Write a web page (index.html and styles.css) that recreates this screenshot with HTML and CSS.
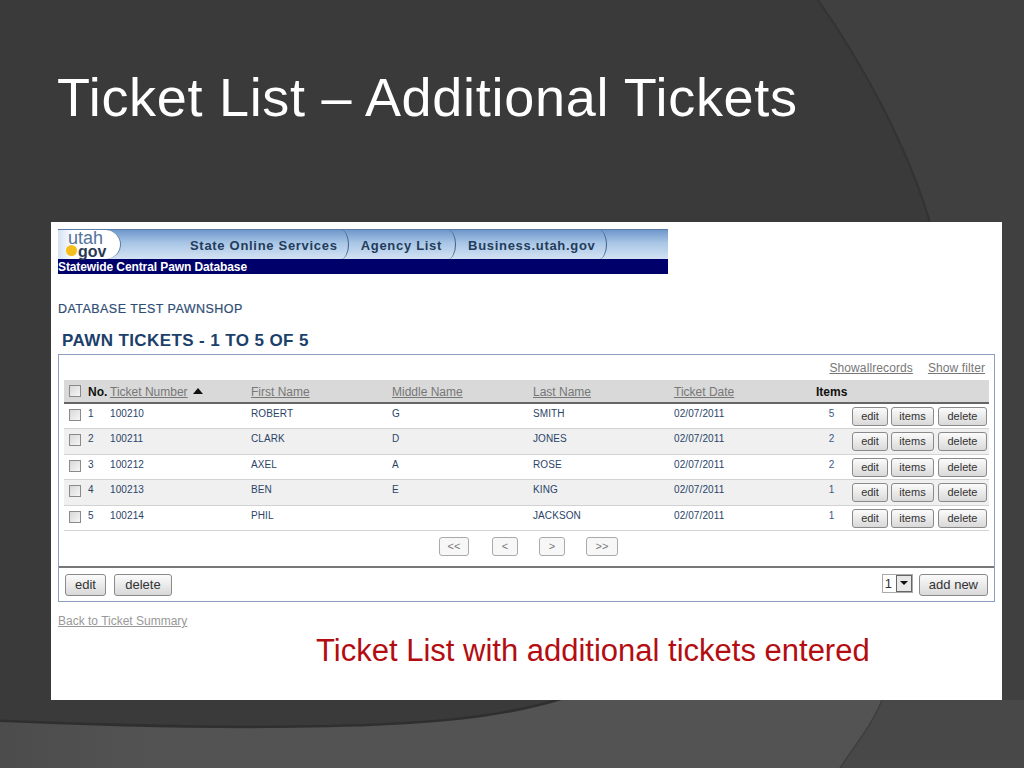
FILE: index.html
```html
<!DOCTYPE html>
<html lang="en">
<head>
  <meta charset="UTF-8">
  <title>Ticket List – Additional Tickets</title>
  <link rel="stylesheet" href="styles.css">
</head>
<body>
  <svg class="backdrop" width="1024" height="768" viewBox="0 0 1024 768" aria-hidden="true">
    <defs>
      <linearGradient id="lower" x1="0" y1="0" x2="1" y2="0">
        <stop offset="0" stop-color="#4c4c4c"/>
        <stop offset="0.15" stop-color="#535353"/>
        <stop offset="1" stop-color="#535353"/>
      </linearGradient>
    </defs>
    <rect width="1024" height="768" fill="#3a3a3a"/>
    <path d="M818 0 C860 60 905 140 930 222 L1024 222 L1024 0 Z" fill="#404040"/>
    <path d="M930 222 L1024 222 L1024 700 L882 700 Z" fill="#404040"/>
    <path d="M818 0 C860 60 905 140 930 222" fill="none" stroke="#333" stroke-width="2"/>
    <path d="M0 722 C100 726 190 729 280 728 C400 727 490 722 562 700" fill="none" stroke="#2f2f2f" stroke-width="5"/>
    <path d="M0 722 C100 726 190 729 280 728 C400 727 490 722 562 700 L1024 700 L1024 768 L0 768 Z" fill="url(#lower)"/>
    <path d="M882 700 C872 725 855 745 840 768 L1024 768 L1024 700 Z" fill="#484848"/>
    <path d="M882 700 C872 725 855 745 840 768" fill="none" stroke="#3e3e3e" stroke-width="1.5"/>
  </svg>

  <main class="slide">
    <h1>Ticket List – Additional Tickets</h1>

    <section class="sheet">
      <header class="banner">
        <nav class="banner-tabs">
          <div class="logo"><span class="logo-utah">utah</span><span class="logo-dot"></span><span class="logo-gov">gov</span></div>
          <a class="tab tab-first">State Online Services</a>
          <a class="tab">Agency List</a>
          <a class="tab tab-last">Business.utah.gov</a>
        </nav>
        <div class="banner-title">Statewide Central Pawn Database</div>
      </header>

      <div class="shop">DATABASE TEST PAWNSHOP</div>
      <h2>PAWN TICKETS - 1 TO 5 OF 5</h2>

      <div class="panel">
        <div class="panel-links">
          <a>Showallrecords</a>
          <a>Show filter</a>
        </div>

        <div class="row row-head">
          <span><input type="checkbox"></span>
          <b>No.</b>
          <span><a>Ticket Number</a><i class="sort-up"></i></span>
          <a>First Name</a>
          <a>Middle Name</a>
          <a>Last Name</a>
          <a>Ticket Date</a>
          <b class="items-head">Items</b>
        </div>

        <div class="row">
          <span><input type="checkbox"></span>
          <span>1</span><span>100210</span><span>ROBERT</span><span>G</span><span>SMITH</span><span>02/07/2011</span>
          <span class="count">5</span>
          <div class="actions"><button class="edit">edit</button><button class="items">items</button><button class="del">delete</button></div>
        </div>
        <div class="row alt">
          <span><input type="checkbox"></span>
          <span>2</span><span>100211</span><span>CLARK</span><span>D</span><span>JONES</span><span>02/07/2011</span>
          <span class="count">2</span>
          <div class="actions"><button class="edit">edit</button><button class="items">items</button><button class="del">delete</button></div>
        </div>
        <div class="row">
          <span><input type="checkbox"></span>
          <span>3</span><span>100212</span><span>AXEL</span><span>A</span><span>ROSE</span><span>02/07/2011</span>
          <span class="count">2</span>
          <div class="actions"><button class="edit">edit</button><button class="items">items</button><button class="del">delete</button></div>
        </div>
        <div class="row alt">
          <span><input type="checkbox"></span>
          <span>4</span><span>100213</span><span>BEN</span><span>E</span><span>KING</span><span>02/07/2011</span>
          <span class="count">1</span>
          <div class="actions"><button class="edit">edit</button><button class="items">items</button><button class="del">delete</button></div>
        </div>
        <div class="row">
          <span><input type="checkbox"></span>
          <span>5</span><span>100214</span><span>PHIL</span><span></span><span>JACKSON</span><span>02/07/2011</span>
          <span class="count">1</span>
          <div class="actions"><button class="edit">edit</button><button class="items">items</button><button class="del">delete</button></div>
        </div>

        <div class="pager">
          <button class="page-first">&lt;&lt;</button>
          <button class="page-one">&lt;</button>
          <button class="page-one">&gt;</button>
          <button class="page-last">&gt;&gt;</button>
        </div>

        <div class="panel-foot">
          <button class="big">edit</button>
          <button class="big big-del">delete</button>
          <div class="foot-right">
            <div class="picker"><span class="picker-val">1</span><span class="picker-btn"><i></i></span></div>
            <button class="big">add new</button>
          </div>
        </div>
      </div>

      <a class="back">Back to Ticket Summary</a>
      <p class="caption">Ticket List with additional tickets entered</p>
    </section>
  </main>
</body>
</html>
```

FILE: styles.css
```css
html, body { margin: 0; padding: 0; height: 768px; overflow: hidden; }
body { font-family: "Liberation Sans", Arial, sans-serif; background: #3a3a3a; color: #2a4468; }
a { text-decoration: underline; }

.backdrop { position: absolute; left: 0; top: 0; }
.slide { position: relative; padding: 62px 22px 0 51px; }

h1 { margin: 0 0 0 6px; height: 160px; font-size: 54px; line-height: 70px; font-weight: 400; color: #fff; letter-spacing: 0.7px; white-space: nowrap; }

.sheet { width: 951px; height: 478px; box-sizing: border-box; background: #fff; padding: 7px 7px 0 7px; }

.banner { width: 610px; }
.banner-tabs { display: flex; height: 30px; background: linear-gradient(#6f98cc, #a9c6e6 45%, #d3e2f3); border-top: 1px solid #5b7ca6; box-sizing: border-box; }
.logo { position: relative; width: 63px; background: linear-gradient(90deg, #d5e2f2, #fff 25%); border-radius: 0 16px 16px 0 / 0 15px 15px 0; border-right: 1px solid #5d7da5; box-sizing: border-box; }
.logo-utah { position: absolute; left: 10px; top: 1px; font-size: 18px; line-height: 14px; color: #54729c; }
.logo-gov { position: absolute; left: 20px; top: 15px; font-size: 16px; line-height: 13px; font-weight: bold; color: #2a3a55; }
.logo-dot { position: absolute; left: 8px; top: 15px; width: 11px; height: 11px; border-radius: 50%; background: #f6be1d; }
.tab { position: relative; display: flex; align-items: center; font-size: 13px; font-weight: bold; letter-spacing: 0.7px; color: #223c5c; text-decoration: none; padding: 2px 14px 0 12px; height: 27px; }
.tab::after { content: ""; position: absolute; right: 0; top: 0; bottom: 0; width: 8px; border-right: 1px solid #3f5f88; border-radius: 0 8px 8px 0 / 0 15px 15px 0; }
.tab-first { margin-left: 50px; padding-left: 19px; padding-right: 11px; }
.tab-last { padding-right: 11px; }
.banner-title { height: 15px; background: #00006a; color: #fff; font-size: 12px; font-weight: bold; line-height: 16px; letter-spacing: -0.1px; overflow: hidden; }

.shop { margin-top: 27px; font-size: 12.5px; line-height: 16px; -webkit-text-stroke: 0.2px #2e4d75; color: #2e4d75; letter-spacing: 0.45px; }
h2 { margin: 14px 0 3px 4px; font-size: 17px; line-height: 20px; font-weight: bold; color: #1c3f6b; letter-spacing: 0.4px; }

.panel { width: 937px; height: 248px; box-sizing: border-box; border: 1px solid #8d9fbf; padding: 0 5px; }
.panel-links { display: flex; justify-content: flex-end; gap: 15px; height: 25px; padding: 5px 4px 0 0; box-sizing: border-box; font-size: 12px; line-height: 16px; color: #777; letter-spacing: 0.1px; }

.row { display: grid; grid-template-columns: 24px 22px 141px 141px 141px 141px 142px 31px 1fr; height: 25.4px; box-sizing: border-box; border-bottom: 1px solid #d2d2d2; font-size: 10px; line-height: 13px; padding-top: 3px; letter-spacing: 0.1px; }
.row.alt { background: #f0f0f0; }
.row input { appearance: none; display: block; margin: 2px 0 0 5px; width: 12px; height: 12px; box-sizing: border-box; border: 1px solid #8a8a8a; background: linear-gradient(135deg, #d8d8d8, #f6f6f6); }
.row-head { height: 24px; background: #d9d9d9; border-bottom: 2px solid #666; font-size: 12px; line-height: 16px; color: #777; padding-top: 4px; letter-spacing: 0; }
.row-head input { margin-top: 1px; }
.row-head b { color: #111; }
.items-head { white-space: nowrap; }
.sort-up { display: inline-block; margin-left: 5px; border: 5px solid transparent; border-top: 0; border-bottom: 6px solid #111; vertical-align: 2px; }
.count { text-align: center; color: #3a5a85; }

.actions { display: flex; margin: 0 0 0 5px; }
button { font-family: "Liberation Sans", Arial, sans-serif; margin: 0; padding: 0; color: #333; background: linear-gradient(#fbfbfb, #d9d9d9); border: 1px solid #8a8a8a; border-radius: 3px; }
.actions button { height: 19px; font-size: 11px; line-height: 15px; }
.actions .edit { width: 36px; margin-right: 3px; }
.actions .items { width: 43px; margin-right: 4px; }
.actions .del { width: 49px; }

.pager { display: flex; gap: 21px; height: 35px; padding: 6px 0 0 375px; box-sizing: border-box; }
.pager button { height: 19px; font-size: 11px; color: #777; background: #f7f7f7; border-color: #aaa; }
.page-first { width: 30px; margin-right: 2px; }
.page-one { width: 26px; }
.page-last { width: 32px; }

.panel-foot { display: flex; align-items: flex-start; gap: 8px; margin: 0 -5px; padding: 6px 6px 0; height: 35px; box-sizing: border-box; border-top: 2px solid #777; }
.big { height: 22px; font-size: 13px; padding: 0 9px; }
.big-del { width: 58px; padding: 0; }
.foot-right { display: flex; gap: 6px; margin-left: auto; }
.picker { display: flex; width: 31px; height: 19px; border: 1px solid #aaa; box-sizing: border-box; background: #fff; font-size: 13px; line-height: 17px; color: #333; }
.picker-val { flex: 1; padding-left: 2px; }
.picker-btn { display: flex; align-items: center; justify-content: center; width: 16px; border: 1px solid #666; background: #e8e8e8; box-sizing: border-box; }
.picker-btn i { border: 4px solid transparent; border-bottom: 0; border-top: 4px solid #111; }

.back { display: block; margin-top: 11px; font-size: 12px; line-height: 16px; color: #999; }
.caption { margin: 5px 0 0 258px; font-size: 31px; line-height: 34px; color: #b30d12; white-space: nowrap; }
```
